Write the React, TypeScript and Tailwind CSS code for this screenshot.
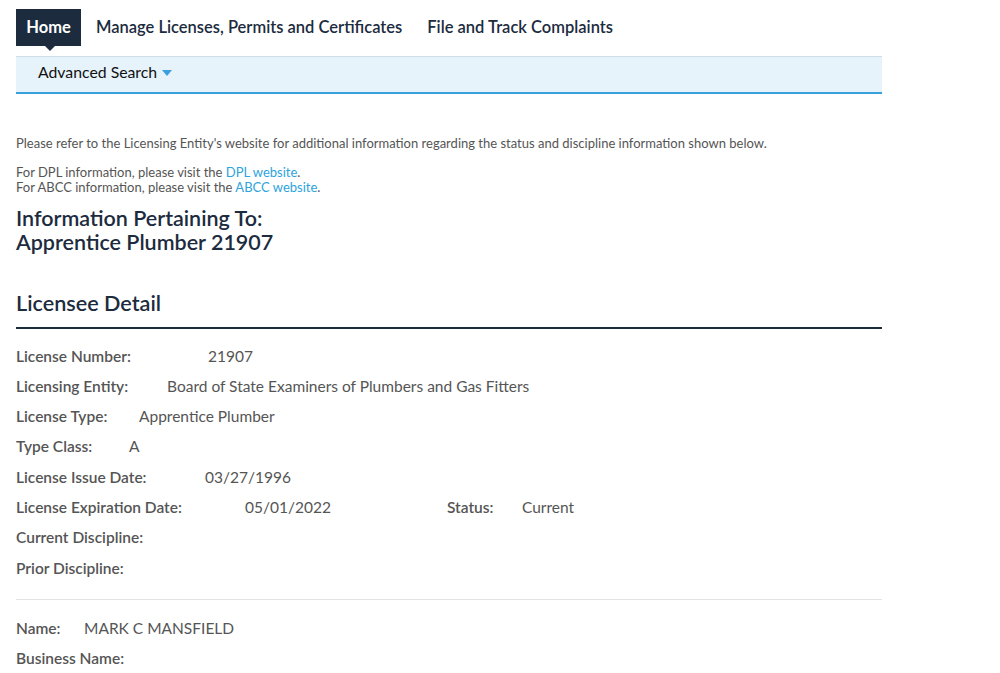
import React from "react";

export default function App() {
  const labelCls = "font-semibold text-[#555]";
  const valCls = "text-[#555]";
  const row = "h-[30.3px] flex items-center";
  return (
    <div className="min-h-[673px] bg-white text-[15.5px]" style={{ fontFamily: "Lato, 'Noto Sans', sans-serif" }}>
      <div className="w-[866px] ml-4">
        {/* top nav */}
        <div className="flex items-start pt-[9px] h-[47px]">
          <div className="relative h-[37px] w-[65px] bg-[#1c2b3e] text-white font-bold text-[16.5px] flex items-center justify-center">
            Home
            <div className="absolute left-[29px] top-[37px] w-0 h-0 border-l-[5px] border-r-[5px] border-t-[5px] border-l-transparent border-r-transparent border-t-[#1c2b3e]" />
          </div>
          <div className="h-[37px] flex items-center ml-[15px] font-semibold text-[16.5px] text-[#1c2b3e]">Manage Licenses, Permits and Certificates</div>
          <div className="h-[37px] flex items-center ml-[25px] font-semibold text-[16.5px] text-[#1c2b3e]">File and Track Complaints</div>
        </div>
        <div className="mt-[9px] h-[38px] bg-[#e7f3fb] border-t border-[#cfdfea] border-b-2 border-b-[#3a9fdc] flex items-start pt-[5px] pl-[22px] text-[15.8px] leading-[20px] text-[#111]">
          Advanced Search
          <span className="ml-[5px] mt-[8px] w-0 h-0 border-l-[5px] border-r-[5px] border-t-[6px] border-l-transparent border-r-transparent border-t-[#3a9fdc]" />
        </div>

        <div className="mt-[42px] text-[13px] text-[#555] leading-[15px]">
          Please refer to the Licensing Entity's website for additional information regarding the status and discipline information shown below.
        </div>
        <div className="mt-[14px] text-[13px] text-[#555] leading-[15px]">
          <div>For DPL information, please visit the <span className="text-[#2ea3dc]">DPL website</span>.</div>
          <div>For ABCC information, please visit the <span className="text-[#2ea3dc]">ABCC website</span>.</div>
        </div>
        <div className="mt-[11px] text-[21.5px] font-semibold text-[#1c2b3e] leading-[24px]">
          <div>Information Pertaining To:</div>
          <div>Apprentice Plumber 21907</div>
        </div>
        <div className="mt-[37px] text-[21.6px] font-semibold text-[#1c2b3e] leading-[24px] pb-[12px] border-b-2 border-[#1c2b3e]">
          Licensee Detail
        </div>

        <div className="mt-[12px] flex flex-col">
          <div className={row}><span className={`${labelCls} w-[192px]`}>License Number:</span><span className={valCls}>21907</span></div>
          <div className={row}><span className={`${labelCls} w-[151px]`}>Licensing Entity:</span><span className={valCls}>Board of State Examiners of Plumbers and Gas Fitters</span></div>
          <div className={row}><span className={`${labelCls} w-[123px]`}>License Type:</span><span className={valCls}>Apprentice Plumber</span></div>
          <div className={row}><span className={`${labelCls} w-[113px]`}>Type Class:</span><span className={valCls}>A</span></div>
          <div className={row}><span className={`${labelCls} w-[189px]`}>License Issue Date:</span><span className={valCls}>03/27/1996</span></div>
          <div className={row}><span className={`${labelCls} w-[229px]`}>License Expiration Date:</span><span className={`${valCls} w-[202px]`}>05/01/2022</span><span className={`${labelCls} w-[75px]`}>Status:</span><span className={valCls}>Current</span></div>
          <div className={row}><span className={labelCls}>Current Discipline:</span></div>
          <div className={row}><span className={labelCls}>Prior Discipline:</span></div>
        </div>
        <div className="mt-[16px] border-t border-[#e3e3e3]" />
        <div className="mt-[13px] flex flex-col">
          <div className={row}><span className={`${labelCls} w-[68px]`}>Name:</span><span className={valCls}>MARK C MANSFIELD</span></div>
          <div className={row}><span className={labelCls}>Business Name:</span></div>
        </div>
      </div>
    </div>
  );
}
